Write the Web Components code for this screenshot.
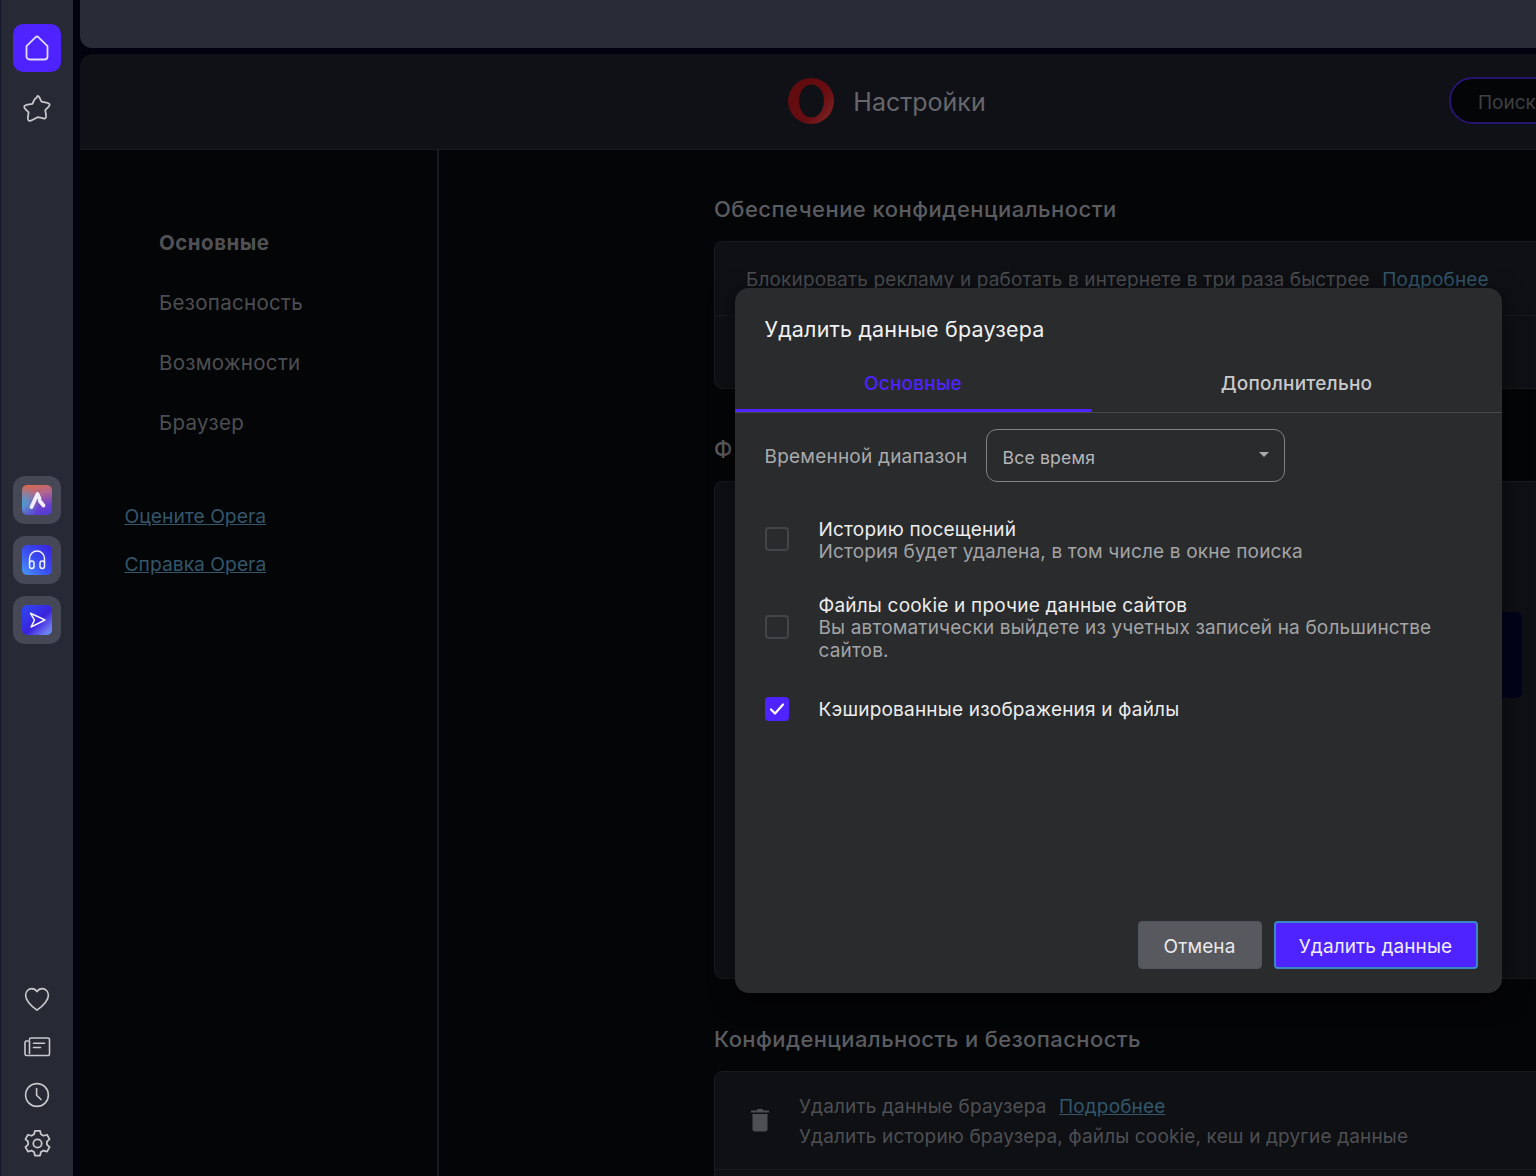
<!doctype html>
<html><head><meta charset="utf-8">
<style>
html,body{margin:0;height:100%;overflow:hidden;background:#02030f}
body{font-family:Inter,"Noto Sans",sans-serif;width:1536px;height:1176px}
</style></head><body>
<opera-app></opera-app>
<template id="t-app"><style>
:host{display:grid;grid-template-columns:73px 1fr;width:1536px;height:1176px;overflow:hidden;position:relative}
.main{display:flex;flex-direction:column;gap:6px;padding-left:7px;min-width:0}
.top{height:48px;background:#292b37;border-bottom-left-radius:12px;flex:none}
.panel{flex:1;background:#040507;border-top-left-radius:12px;overflow:hidden;display:flex;flex-direction:column;min-height:0}
.row{flex:1;display:grid;grid-template-columns:359px 1fr;min-height:0}
</style>
<o-rail></o-rail>
<div class="main"><div class="top"></div>
<div class="panel"><o-header></o-header><div class="row"><o-nav></o-nav><o-content></o-content></div></div></div>
<o-dialog></o-dialog></template>

<template id="t-rail"><style>
:host{display:flex;flex-direction:column;align-items:center;background:#272934;border-left:1px solid #15162a;box-sizing:border-box;height:1176px;width:73px;padding:24px 0 9px}
.b{width:48px;height:48px;display:flex;align-items:center;justify-content:center;border-radius:10px;flex:none}
.b svg{fill:none;stroke:#c8c8cd;stroke-width:1.6;stroke-linecap:round;stroke-linejoin:round}
.on{background:#4f23ff}.on svg{stroke:#e0dbff;stroke-width:1.8}
.app{background:#464856;border-radius:12px;margin-bottom:12px}
.tile{width:30px;height:30px;border-radius:5px;display:flex;align-items:center;justify-content:center}
.t1{background:radial-gradient(circle at 0 62%,#4aa0d0 0,rgba(74,160,208,0) 50%),linear-gradient(165deg,#dd6a42 0%,#b0668c 35%,#6a3fd0 72%,#4f3ad0 100%)}
.t2{background:linear-gradient(45deg,#4a9af5 0%,#3a50f0 45%,#3a1fe0 100%)}
.t3{background:linear-gradient(135deg,#2d4bf0 0%,#3a22dd 55%,#6d77f0 85%,#5aa0f0 100%)}
.t1 svg,.t2 svg,.t3 svg{stroke:#f2f0ff}
.sp{flex:1}
.apps{margin-top:344px;display:flex;flex-direction:column}
</style>
<div class="b on" style="margin-bottom:12px"><svg width="24" height="28" viewBox="0 0 24 28"><path d="M1.5 12.2 10.4 3.3a2.3 2.3 0 0 1 3.2 0l8.900 8.900v10.300a3 3 0 0 1-3 3h-15a3 3 0 0 1-3-3z"/></svg></div>
<div class="b"><svg width="31" height="31" viewBox="0 0 28 28"><path d="M14 2.6c.9 0 1.4.7 1.900 1.700l1.700 3.600 4.300.7c1.700.3 3.100.9 3.100 2 0 .8-.6 1.400-1.300 2.100l-2.700 2.800.7 4.500c.2 1.400 0 2.600-1 3.100-.9.4-1.900-.1-3-.7L14 21.900l-4.700 2.500c-1.100.6-2.100 1.100-3 .7-1-.5-1.200-1.700-1-3.100l.7-4.500-2.700-2.800c-.7-.7-1.300-1.300-1.300-2.100 0-1.100 1.400-1.700 3.100-2l4.300-.7 1.700-3.600c.5-1 1-1.700 1.900-1.700z"/></svg></div>
<div class="apps">
<div class="b app"><div class="tile t1"><svg width="22" height="22" viewBox="0 0 22 22" style="stroke-width:3.800"><path d="M5.500 18 11.500 5l2 4.500M13.800 12l3.700 4.500"/></svg></div></div>
<div class="b app"><div class="tile t2"><svg width="24" height="24" viewBox="0 0 24 24" style="stroke-width:1.500"><path d="M4.500 14.500V10.500a7.500 7.500 0 0 1 15 0v4"/><rect x="4.500" y="13" width="4.500" height="7.500" rx="2.200"/><rect x="15" y="13" width="4.500" height="7.500" rx="2.200"/></svg></div></div>
<div class="b app"><div class="tile t3"><svg width="22" height="22" viewBox="0 0 22 22" style="stroke-width:1.500"><path d="M4.500 4.300 19 11 5 18l3.500-6.800z"/></svg></div></div>
</div>
<div class="sp"></div>
<div class="b"><svg width="28" height="28" viewBox="0 0 28 28"><path d="M14 25.200C9 21.500 2.600 16.500 2.600 10.200 2.600 6.400 5.500 3.600 8.800 3.600c2.300 0 4 1.100 5.200 3.100 1.200-2 2.900-3.100 5.200-3.100 3.300 0 6.200 2.800 6.200 6.600 0 6.300-6.400 11.300-11.400 15z"/></svg></div>
<div class="b"><svg width="28" height="28" viewBox="0 0 28 28"><path d="M6.500 6.500a1.500 1.500 0 0 1 1.500-1.500h17a1.500 1.500 0 0 1 1.500 1.500v14.500a1.500 1.500 0 0 1-1.500 1.500H3.500A1.500 1.500 0 0 1 2 21V9.500A1.500 1.500 0 0 1 3.500 8h3v12.500"/><path d="M10.500 10.300h11M10.500 14.500h7"/></svg></div>
<div class="b"><svg width="28" height="28" viewBox="0 0 28 28"><circle cx="14" cy="14" r="11.400"/><path d="M13.600 7.500v6.700l4.400 4.300"/></svg></div>
<div class="b"><svg width="31" height="31" viewBox="0 0 28 28"><circle cx="14" cy="14" r="3.800"/><path d="M11.700 2.500h4.600l.8 3.200 2.300 1.300 3.200-.9 2.300 4-2.400 2.300v2.600l2.400 2.300-2.300 4-3.200-.9-2.300 1.300-.8 3.200h-4.600l-.8-3.200-2.300-1.300-3.200.9-2.300-4 2.400-2.300v-2.600L3.100 10.100l2.300-4 3.200.9 2.300-1.300z"/></svg></div>
</template>

<template id="t-header"><style>
:host{display:flex;height:96px;background:#0f1116;border-bottom:1px solid #181a20;box-sizing:border-box;position:relative;align-items:center;justify-content:center;flex:none}
.c{display:flex;align-items:center;gap:18px;margin-left:157px}
svg{margin-top:-2px}
h1{margin:0;font:400 25px/32px Inter,sans-serif;color:#66676c}
.s{position:absolute;left:1369px;top:23px;width:200px;height:47px;box-sizing:border-box;border:2px solid #26146e;border-radius:24px;background:#040507;color:#3f4044;font:400 19px/47px Inter,sans-serif;padding-left:27px}
</style>
<div class="c"><svg width="48" height="48" viewBox="0 0 48 48"><defs><linearGradient id="og" x1="0" x2="1" y1=".2" y2=".9"><stop offset="0" stop-color="#5f0b0f"/><stop offset=".6" stop-color="#680d11"/><stop offset="1" stop-color="#7e2624"/></linearGradient></defs><path fill-rule="evenodd" fill="url(#og)" d="M24 1a23 23 0 1 1 0 46 23 23 0 0 1 0-46zm.500 6.500c-6.900 0-12.500 7.400-12.500 16.500s5.600 16.500 12.500 16.500S37 33.100 37 24 31.400 7.500 24.500 7.500z"/></svg><h1>Настройки</h1></div>
<div class="s">Поиск</div></template>

<template id="t-nav"><style>
:host{display:flex;flex-direction:column;border-right:2px solid #181a1f;box-sizing:border-box;padding:63px 0 0 44.500px;height:100%}
.i{font:400 20.500px/60px Inter,sans-serif;color:#4d4e52;padding-left:34.500px;letter-spacing:.3px}
.i.a{font-weight:700;color:#505154;letter-spacing:.5px}
.links{margin-top:51px;display:flex;flex-direction:column;gap:24px}
a{font:400 19.300px/24px Inter,sans-serif;color:#33566a;text-decoration:underline}
</style>
<div class="i a">Основные</div><div class="i">Безопасность</div><div class="i">Возможности</div><div class="i">Браузер</div>
<div class="links"><a>Оцените Opera</a><a>Справка Opera</a></div></template>

<template id="t-content"><style>
:host{display:block;padding:44px 0 0 275px;overflow:hidden;height:100%;box-sizing:border-box}
h2{margin:0;font:500 22px/30px Inter,sans-serif;color:#5b5c60;letter-spacing:.47px;white-space:nowrap}
.card{background:#0e1014;border:1px solid #181a20;border-radius:8px;width:900px;box-sizing:border-box;margin-top:17px}
.ln{height:74px;border-bottom:1px solid #181a20;box-sizing:border-box;padding:25px 0 0 31px;font:400 19px/26px Inter,sans-serif;color:#4c4d51;white-space:nowrap;letter-spacing:.15px}
.ln a,.d a{color:#33566a;text-decoration:none}
.ln a{margin-left:7px}
.bl{height:498px;background:#0e1014;border:1px solid #181a20;border-radius:8px;width:900px;box-sizing:border-box;position:relative}
.hi{position:absolute;right:91px;top:130px;width:30px;height:86px;background:#01041a;border-radius:6px}
.r{display:flex;height:98px;border-bottom:1px solid #181a20;box-sizing:border-box}
.ic{width:84px;flex:none;display:flex;justify-content:center;padding:36px 0 0 5px;box-sizing:border-box}
.d{padding-top:20px;font:400 19px/30px Inter,sans-serif;color:#4e4f53;white-space:nowrap;letter-spacing:.15px}
.d a{text-decoration:underline;margin-left:7px}
.h3{margin-top:45px;letter-spacing:.4px}
</style>
<h2>Обеспечение конфиденциальности</h2>
<div class="card" style="height:148px"><div class="ln">Блокировать рекламу и работать в интернете в три раза быстрее <a>Подробнее</a></div></div>
<h2 style="margin-top:45px">Ф</h2>
<div class="bl" style="margin-top:17px"><div class="hi"></div></div>
<h2 class="h3">Конфиденциальность и безопасность</h2>
<div class="card" style="height:200px"><div class="r"><div class="ic"><svg width="20" height="24" viewBox="0 0 20 24"><path fill="#4e4f53" d="M7.500 1h5l1 1.500H19v2H1v-2h5.500zM2.500 6h15v15a2.500 2.500 0 0 1-2.500 2.500H5A2.500 2.500 0 0 1 2.500 21z"/></svg></div><div class="d">Удалить данные браузера <a>Подробнее</a><br>Удалить историю браузера, файлы cookie, кеш и другие данные</div></div></div>
</template>

<template id="t-dialog"><style>
:host{position:absolute;left:734.500px;top:288px;width:767px;height:705px;background:#2a2b2d;border-radius:14px;box-shadow:0 6px 24px rgba(0,0,0,.55);display:flex;flex-direction:column;color:#f1f1f2;font-family:Inter,sans-serif}
h3{margin:0;font:400 21.500px/30px Inter,sans-serif;padding:26px 0 0 30px;height:57px;box-sizing:border-box;flex:none;letter-spacing:.17px}
.tabs{display:grid;grid-template-columns:357px 1fr;height:68px;border-bottom:1px solid #47484b;box-sizing:border-box;flex:none}
.tab{display:flex;justify-content:center;align-items:flex-start;padding-top:27px;font:500 19px/24px Inter,sans-serif;color:#c9c9cb;letter-spacing:.2px;height:67px;box-sizing:border-box}
.tab.a{color:#4f23ff;border-bottom:3px solid #4f23ff;border-radius:0 0 2px 0}
.range{display:flex;align-items:center;padding:16px 0 0 30px;height:53px;box-sizing:content-box;flex:none}
.range label{font:400 19px/24px Inter,sans-serif;color:#a9aaac;letter-spacing:.22px;width:221px;flex:none;margin-top:3px;white-space:nowrap}
.sel{width:299px;height:53px;box-sizing:border-box;border:1.500px solid #808184;border-radius:11px;display:flex;align-items:center;justify-content:space-between;padding:5px 15px 0 16px;font:400 17.600px/24px Inter,sans-serif;color:#b5b6b8;letter-spacing:.18px}
.sel i{width:0;height:0;border:5.500px solid transparent;border-top:5.500px solid #a9a9ad;border-bottom:0;margin-top:-8px}
.opts{padding:0 30px;flex:1}
.foot{display:flex;justify-content:flex-end;gap:12px;padding:0 24px 24px;flex:none}
button{font:400 19px/24px Inter,sans-serif;height:48px;border-radius:4px;box-sizing:border-box;color:#e8e8ea;cursor:default;letter-spacing:.1px;padding:3px 0 0}
.c{width:124px;background:#58585f;border:1px solid #4d5560}
.p{width:204px;background:#4f23ff;border:2px solid #3c86c8;color:#f0effa}
</style>
<h3>Удалить данные браузера</h3>
<div class="tabs"><div class="tab a">Основные</div><div class="tab">Дополнительно</div></div>
<div class="range"><label>Временной диапазон</label><div class="sel">Все время<i></i></div></div>
<div class="opts">
<o-opt style="height:112px;--top:37px;--boxtop:45px"><span>Историю посещений</span><span slot="sub">История будет удалена, в том числе в окне поиска</span></o-opt>
<o-opt style="height:104px;--top:1px;--boxtop:21px"><span>Файлы cookie и прочие данные сайтов</span><span slot="sub">Вы автоматически выйдете из учетных записей на большинстве сайтов.</span></o-opt>
<o-opt checked style="--top:1px;--boxtop:-1px"><span>Кэшированные изображения и файлы</span></o-opt>
</div>
<div class="foot"><button class="c">Отмена</button><button class="p">Удалить данные</button></div>
</template>

<template id="t-opt"><style>
:host{display:flex;align-items:flex-start;box-sizing:border-box;font-family:Inter,sans-serif}
.box{width:24px;height:24px;box-sizing:border-box;border:2.500px solid #444548;border-radius:4px;flex:none;margin-top:var(--boxtop,0);margin-right:30px;display:flex;align-items:center;justify-content:center}
:host([checked]) .box{background:#4f23ff;border-color:#4f23ff}
.t{padding-top:var(--top,0)}
.m{font:400 19px/22px Inter,sans-serif;color:#ededee;letter-spacing:.2px}
.s{font:400 19px/22.500px Inter,sans-serif;color:#a3a4a6;letter-spacing:.16px;width:640px}
svg{display:none;flex:none}:host([checked]) svg{display:block}
</style>
<div class="box"><svg width="16" height="14" viewBox="0 0 16 14" fill="none" stroke="#fff" stroke-width="2.200" stroke-linecap="round" stroke-linejoin="round"><path d="M2 7.500 6 11.500 14 2.500"/></svg></div>
<div class="t"><div class="m"><slot></slot></div><div class="s"><slot name="sub"></slot></div></div>
</template>

<script>
const reg=(n,t)=>customElements.define(n,class extends HTMLElement{constructor(){super();this.attachShadow({mode:'open'}).appendChild(document.getElementById(t).content.cloneNode(true))}});
reg('o-opt','t-opt');reg('o-rail','t-rail');reg('o-header','t-header');reg('o-nav','t-nav');reg('o-content','t-content');reg('o-dialog','t-dialog');reg('opera-app','t-app');
</script>
</body></html>
